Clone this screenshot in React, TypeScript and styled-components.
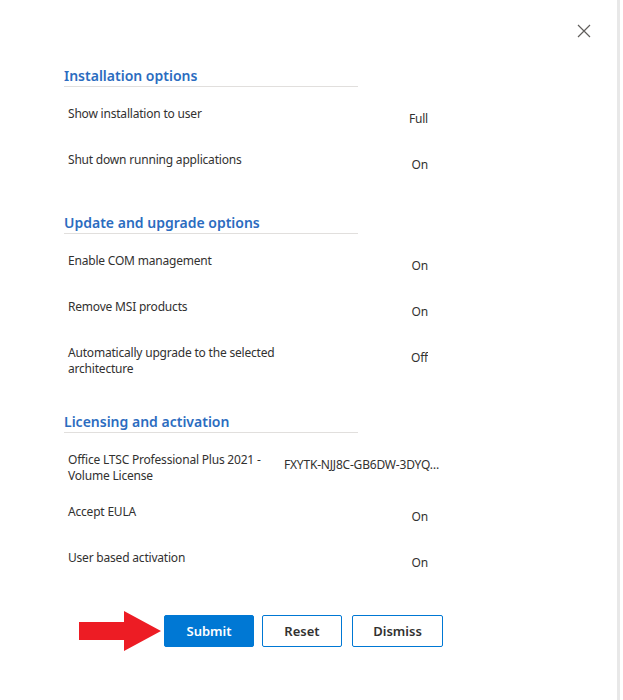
import React from 'react';
import styled, {createGlobalStyle} from 'styled-components';

const Global = createGlobalStyle`
    body { margin: 0; background: #fff; font-family: "Noto Sans", "Open Sans", sans-serif; color: #323130; }
`;

const Panel = styled.div`
    position: relative;
    width: 620px;
    height: 700px;
    border-right: 3px solid #e8e8e8;
    padding: 66px 0 0 64px;
    box-sizing: border-box;
`;

const Close = styled.button`
    position: absolute;
    top: 20px;
    right: 22px;
    border: none;
    background: none;
    padding: 4px;
    cursor: pointer;
`;

const Section = styled.section`
    margin-bottom: 15px;
`;

const Heading = styled.h2`
    width: 294px;
    margin: 0 0 19px;
    padding-bottom: 1px;
    border-bottom: 1px solid #e1dfdd;
    font-size: 14px;
    line-height: 19px;
    font-weight: 600;
    color: #2b6cc0;
`;

const Row = styled.div`
    display: flex;
    min-height: 46px;
    padding-left: 4px;
    font-size: 12px;
    line-height: 16px;
    letter-spacing: -0.2px;
    box-sizing: border-box;
    padding-bottom: 20px;
`;

const Label = styled.div<{wide?: boolean}>`
    width: ${p => p.wide ? '216px' : '228px'};
    padding-right: 10px;
    box-sizing: border-box;
`;

const Value = styled.div<{wide?: boolean}>`
    width: ${p => p.wide ? '156px' : '132px'};
    margin-top: 5px;
    text-align: ${p => p.wide ? 'left' : 'right'};
    white-space: nowrap;
    overflow: hidden;
    text-overflow: ellipsis;
`;

const Actions = styled.div`
    display: flex;
    align-items: center;
    margin-top: 14px;
    margin-left: 15px;
    gap: 8px;
`;

const Button = styled.button<{primary?: boolean}>`
    height: 32px;
    padding: 0 16px;
    border-radius: 2px;
    border: 1px solid #0078d4;
    background: ${p => p.primary ? '#0078d4' : '#fff'};
    color: ${p => p.primary ? '#fff' : '#323130'};
    font-family: inherit;
    font-size: 13px;
    font-weight: 600;
`;

type Item = {label: string; value: string; wide?: boolean};

const sections: {title: string; items: Item[]}[] = [
    {title: 'Installation options', items: [
        {label: 'Show installation to user', value: 'Full'},
        {label: 'Shut down running applications', value: 'On'},
    ]},
    {title: 'Update and upgrade options', items: [
        {label: 'Enable COM management', value: 'On'},
        {label: 'Remove MSI products', value: 'On'},
        {label: 'Automatically upgrade to the selected architecture', value: 'Off'},
    ]},
    {title: 'Licensing and activation', items: [
        {label: 'Office LTSC Professional Plus 2021 - Volume License', value: 'FXYTK-NJJ8C-GB6DW-3DYQT-6F7TH', wide: true},
        {label: 'Accept EULA', value: 'On'},
        {label: 'User based activation', value: 'On'},
    ]},
];

export default function App() {
    return (
        <Panel>
            <Global />
            <Close aria-label="Close">
                <svg width="14" height="14" viewBox="0 0 14 14">
                    <path d="M1 1L13 13M13 1L1 13" stroke="#605e5c" strokeWidth="1.2" />
                </svg>
            </Close>
            {sections.map(s => (
                <Section key={s.title}>
                    <Heading>{s.title}</Heading>
                    {s.items.map(i => (
                        <Row key={i.label}>
                            <Label wide={i.wide}>{i.label}</Label>
                            <Value wide={i.wide}>{i.value}</Value>
                        </Row>
                    ))}
                </Section>
            ))}
            <Actions>
                <svg width="82" height="40" viewBox="0 0 82 40" style={{marginRight: -5}}>
                    <polygon points="0,11 45,11 45,0 82,20 45,40 45,29 0,29" fill="#ed1c24" />
                </svg>
                <Button primary style={{width: 90}}>Submit</Button>
                <Button style={{width: 80}}>Reset</Button>
                <Button style={{width: 91, marginLeft: 2}}>Dismiss</Button>
            </Actions>
        </Panel>
    );
}
